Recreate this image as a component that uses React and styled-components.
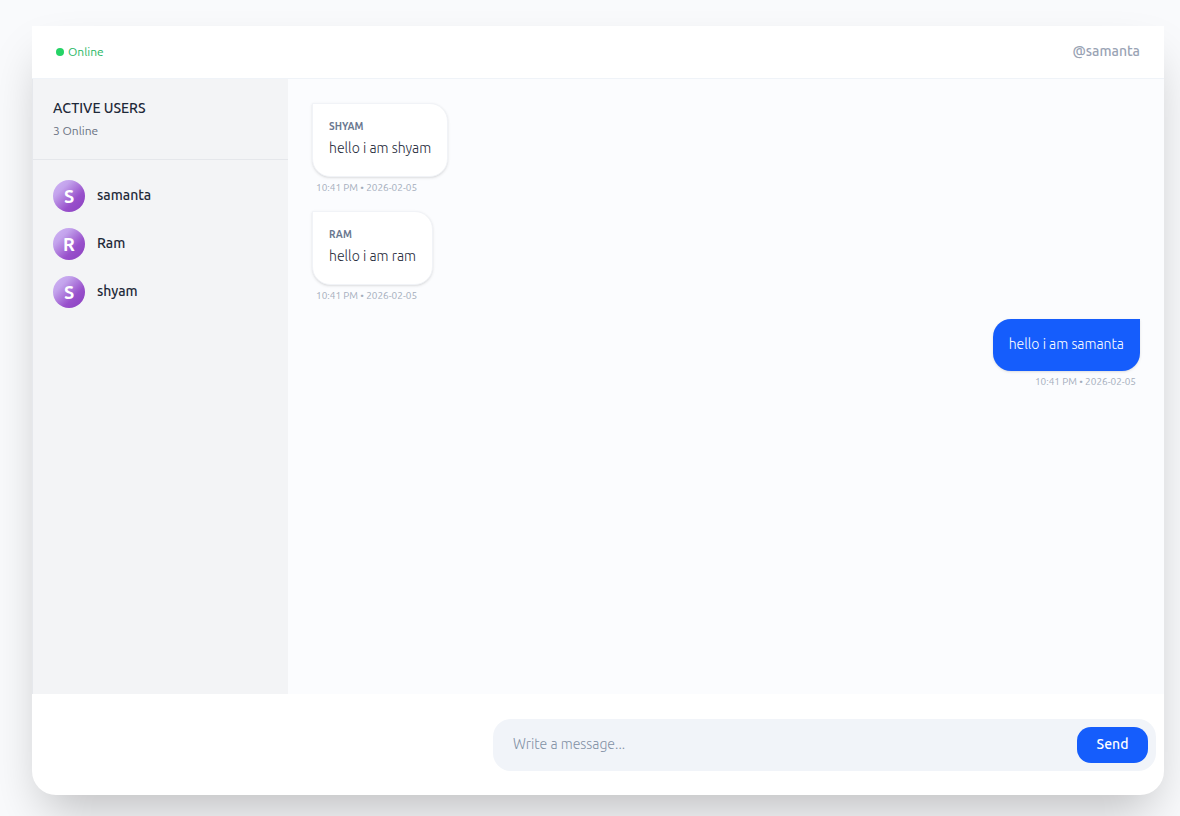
import React, { useState } from "react";
import styled, { createGlobalStyle } from "styled-components";

const GlobalStyle = createGlobalStyle`
  *, *::before, *::after { box-sizing: border-box; }
  body {
    margin: 0;
    background: #f9fafc;
    color: #1e2939;
    font-family: Ubuntu, "Noto Sans", sans-serif;
    font-size: 14px;
    line-height: 20px;
  }
  h2, p, ul { margin: 0; padding: 0; }
  ul { list-style: none; }
  button, input { font: inherit; }
`;

const Page = styled.div`
  min-height: 100vh;
  display: flex;
  padding: 26px 16px 21px 32px;
  overflow: hidden;
`;

const Card = styled.div`
  flex: 1;
  min-width: 0;
  display: flex;
  flex-direction: column;
  background: #ffffff;
  border-radius: 0 0 24px 24px;
  box-shadow: 0 25px 50px -12px rgba(0, 0, 0, 0.25);
`;

const Header = styled.header`
  display: flex;
  align-items: flex-start;
  justify-content: space-between;
  padding: 15px 24px;
  border-bottom: 1px solid #eff3f8;
`;

const Status = styled.span`
  display: flex;
  align-items: center;
  gap: 4px;
  font-size: 12px;
  line-height: 22px;
  color: #28b765;
`;

const Dot = styled.span`
  width: 8px;
  height: 8px;
  border-radius: 50%;
  background: #25d366;
`;

const Handle = styled.span`
  font-weight: 500;
  color: #99a3b4;
`;

const Body = styled.div`
  flex: 1;
  display: flex;
`;

const Sidebar = styled.aside`
  width: 256px;
  flex-shrink: 0;
  background: #f3f4f6;
  border-left: 1px solid #e6e8ec;
`;

const SidebarHead = styled.div`
  padding: 19px 20px 20px;
  border-bottom: 1px solid #e5e7eb;
`;

const SidebarTitle = styled.h2`
  font-size: 14px;
  font-weight: 500;
  line-height: 20px;
  text-transform: uppercase;
`;

const Count = styled.p`
  margin-top: 5px;
  font-size: 12px;
  line-height: 16px;
  color: #6a7282;
`;

const Users = styled.ul`
  display: flex;
  flex-direction: column;
  gap: 16px;
  padding: 20px;
`;

const User = styled.li`
  display: flex;
  gap: 12px;
  font-weight: 500;
  line-height: 30px;
`;

const Avatar = styled.span`
  width: 32px;
  height: 32px;
  display: grid;
  place-items: center;
  border-radius: 50%;
  background: linear-gradient(135deg, #d0b4f6 0%, #c3a3ec 28%, #9850cb 66%, #8b40c0 100%);
  color: #ffffff;
  font-size: 18px;
  font-weight: 700;
`;

const Messages = styled.main`
  flex: 1;
  display: flex;
  flex-direction: column;
  gap: 16px;
  padding: 24px;
  background: #fbfcfe;
`;

const Message = styled.article`
  display: flex;
  flex-direction: column;
  gap: 4px;
  align-items: ${(p) => (p.$own ? "flex-end" : "flex-start")};
`;

const Bubble = styled.div`
  padding: ${(p) => (p.$own ? "15px 16px 17px" : "15px 16px 18px")};
  border: ${(p) => (p.$own ? "none" : "1px solid #f1f3f7")};
  border-radius: ${(p) => (p.$own ? "18px 0 18px 18px" : "0 18px 18px 18px")};
  background: ${(p) => (p.$own ? "#155dfc" : "#ffffff")};
  color: ${(p) => (p.$own ? "#ffffff" : "#1e2939")};
  font-weight: 300;
  box-shadow: 0 1px 3px rgba(0, 0, 0, 0.1), 0 1px 2px -1px rgba(0, 0, 0, 0.1);
`;

const Sender = styled.p`
  margin-bottom: 3px;
  font-size: 10px;
  line-height: 16px;
  font-weight: 600;
  text-transform: uppercase;
  color: #6a7890;
`;

const Time = styled.time`
  padding: 0 4px;
  font-size: 10px;
  line-height: 14px;
  color: #a3acbb;
`;

const Footer = styled.footer`
  display: flex;
  justify-content: flex-end;
  padding: 25px 8px 24px;
`;

const Composer = styled.form`
  width: calc(50% + 105px);
  display: flex;
  padding: 8px;
  border-radius: 18px;
  background: #f1f4f9;
`;

const Field = styled.input`
  flex: 1;
  min-width: 0;
  padding: 0 12px 2px;
  border: 0;
  outline: 0;
  background: transparent;
  font-weight: 300;
  color: #1e2939;
  &::placeholder { color: #8391a5; opacity: 1; }
`;

const Send = styled.button`
  width: 71px;
  height: 36px;
  padding: 0 0 2px;
  border: 0;
  border-radius: 14px;
  background: #155dfc;
  color: #ffffff;
  font-weight: 500;
  cursor: pointer;
`;

const users = ["samanta", "Ram", "shyam"];

const messages = [
  { from: "shyam", text: "hello i am shyam" },
  { from: "ram", text: "hello i am ram" },
  { from: "samanta", text: "hello i am samanta", own: true },
];

export default function App() {
  const [draft, setDraft] = useState("");
  return (
    <>
      <GlobalStyle />
      <Page>
        <Card>
          <Header>
            <Status><Dot />Online</Status>
            <Handle>@samanta</Handle>
          </Header>
          <Body>
            <Sidebar>
              <SidebarHead>
                <SidebarTitle>Active Users</SidebarTitle>
                <Count>{users.length} Online</Count>
              </SidebarHead>
              <Users>
                {users.map((name) => (
                  <User key={name}>
                    <Avatar>{name[0].toUpperCase()}</Avatar>
                    {name}
                  </User>
                ))}
              </Users>
            </Sidebar>
            <Messages>
              {messages.map((m) => (
                <Message key={m.from} $own={m.own}>
                  <Bubble $own={m.own}>
                    {!m.own && <Sender>{m.from}</Sender>}
                    <p>{m.text}</p>
                  </Bubble>
                  <Time dateTime="2026-02-05T22:41">10:41 PM • 2026-02-05</Time>
                </Message>
              ))}
            </Messages>
          </Body>
          <Footer>
            <Composer onSubmit={(e) => e.preventDefault()}>
              <Field
                aria-label="Message"
                placeholder="Write a message..."
                value={draft}
                onChange={(e) => setDraft(e.target.value)}
              />
              <Send type="submit">Send</Send>
            </Composer>
          </Footer>
        </Card>
      </Page>
    </>
  );
}
